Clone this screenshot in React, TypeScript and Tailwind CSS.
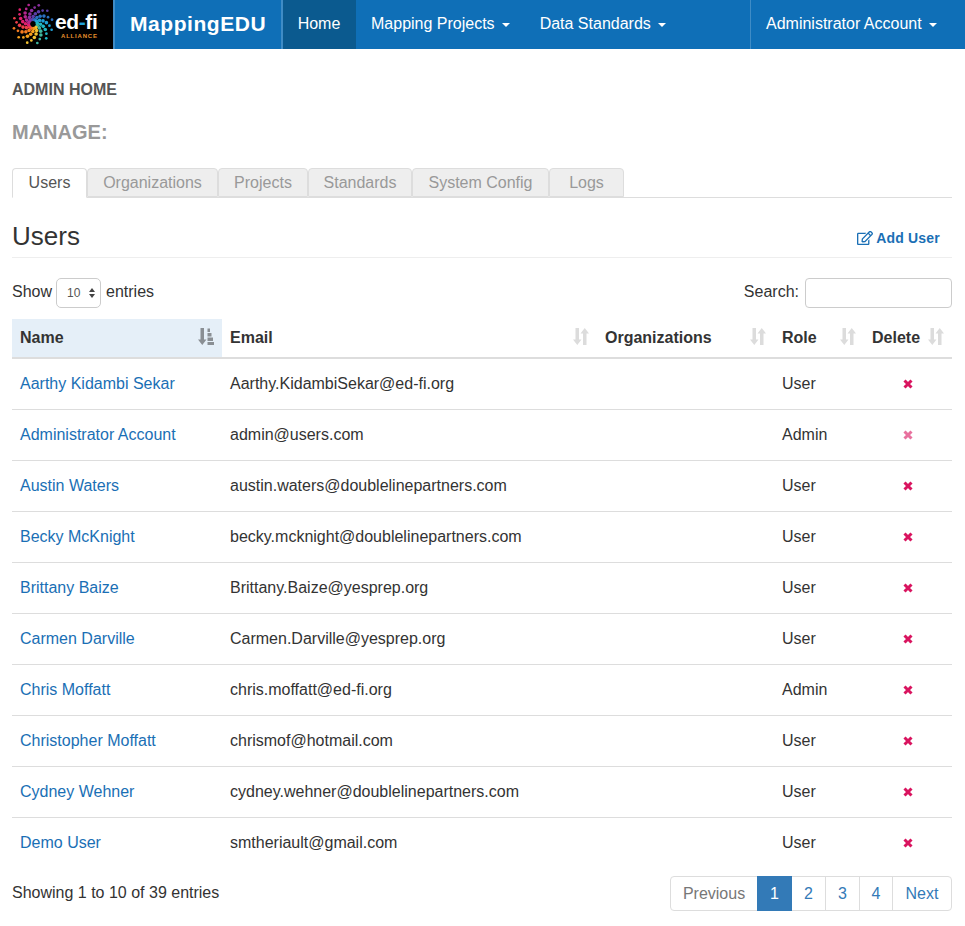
import { FaRegEdit } from 'react-icons/fa'

const users = [
  { name: 'Aarthy Kidambi Sekar', email: 'Aarthy.KidambiSekar@ed-fi.org', role: 'User' },
  { name: 'Administrator Account', email: 'admin@users.com', role: 'Admin', self: true },
  { name: 'Austin Waters', email: 'austin.waters@doublelinepartners.com', role: 'User' },
  { name: 'Becky McKnight', email: 'becky.mcknight@doublelinepartners.com', role: 'User' },
  { name: 'Brittany Baize', email: 'Brittany.Baize@yesprep.org', role: 'User' },
  { name: 'Carmen Darville', email: 'Carmen.Darville@yesprep.org', role: 'User' },
  { name: 'Chris Moffatt', email: 'chris.moffatt@ed-fi.org', role: 'Admin' },
  { name: 'Christopher Moffatt', email: 'chrismof@hotmail.com', role: 'User' },
  { name: 'Cydney Wehner', email: 'cydney.wehner@doublelinepartners.com', role: 'User' },
  { name: 'Demo User', email: 'smtheriault@gmail.com', role: 'User' },
]

const tabs = [
  { label: 'Organizations', w: 'w-[131px]' },
  { label: 'Projects', w: 'w-[90px]' },
  { label: 'Standards', w: 'w-[104px]' },
  { label: 'System Config', w: 'w-[137px]' },
  { label: 'Logs', w: 'w-[75px]' },
]

// clockwise from the top of the swirl
const swirlColors = ['#8a2f9e', '#5a3fa8', '#2a6fc0', '#1f9fd6', '#1fb5c4', '#3fb8a0', '#f2c230', '#f7a11d', '#f47a20', '#ee3f4a', '#e0206e', '#b5258f']

function Logo() {
  const dots = []
  for (let arm = 0; arm < 12; arm++) {
    for (let i = 0; i < 6; i++) {
      const a = (arm / 12) * Math.PI * 2 - Math.PI / 2 - 0.7 + i * 0.2
      const r = 4.5 + i * 3
      dots.push(
        <circle key={`${arm}-${i}`} cx={26 + r * Math.cos(a)} cy={24 + r * Math.sin(a)} r={i < 4 ? 1.8 : 1.35} fill={swirlColors[arm]} />
      )
    }
  }
  return (
    <svg width="52" height="49" viewBox="0 0 52 49" className="absolute left-[7px] top-0">
      {dots}
    </svg>
  )
}

function SortIcon({ active = false }: { active?: boolean }) {
  if (active) {
    return (
      <svg width="16" height="17" viewBox="0 0 16 17" className="absolute right-[8px] top-[9px] text-[#8a8f94]" fill="currentColor">
        <path d="M2.500 0h3.500v11.500h2.500L4.250 17 0 11.500h2.500z" />
        <path d="M9.500 0.500h2.500v3.500H9.500zM9.500 5h4v3.500h-4zM9.500 9.500h5.500V13H9.500zM9.500 14h6.500v3H9.500z" />
      </svg>
    )
  }
  return (
    <svg width="16" height="17" viewBox="0 0 16 17" className="absolute right-[8px] top-[9px] text-[#dcdcdc]" fill="currentColor">
      <path d="M2.500 0h3.500v11.500h2.500L4.250 17 0 11.500h2.500z" />
      <path d="M10 17h3.500V5.500H16L11.750 0 7.500 5.500H10z" />
    </svg>
  )
}

function RemoveIcon({ faded = false }: { faded?: boolean }) {
  return (
    <svg width="10" height="10" viewBox="0 0 10 10" className={`mx-auto text-[#d9145f] ${faded ? 'opacity-60' : ''}`}>
      <path d="M1.500 1.500L8.500 8.500M8.500 1.500L1.500 8.500" stroke="currentColor" strokeWidth="3" />
    </svg>
  )
}

function NavLink({ label }: { label: string }) {
  return (
    <a className="flex items-center px-[15px] pb-[2px] h-full text-white text-[16px]">
      {label}
      <span className="ml-[7px] mt-[2px] w-0 h-0 border-x-[4px] border-x-transparent border-t-[4px] border-t-white" />
    </a>
  )
}

export default function App() {
  return (
    <div className="w-[965px] h-[926px] bg-white text-[16px] text-[#333] overflow-hidden font-['Liberation_Sans',Arial,sans-serif]">
      <nav className="flex h-[49px] bg-[#0f6fb7]">
        <div className="relative w-[113px] bg-black">
          <Logo />
          <span className="absolute left-[55px] top-[12px] text-white text-[21px] font-bold leading-[20px] tracking-[-0.4px]">
            ed<span className="text-[#1fa2d8]">-</span>fi
          </span>
          <span className="absolute left-[61px] top-[32px] text-[#e8912d] text-[6px] font-bold leading-[8px] tracking-[0.8px]">ALLIANCE</span>
        </div>
        <div className="flex items-center w-[170px] pl-[15px] pb-[2px] border-x-2 border-[#3f8cc6] text-white text-[21px] font-bold tracking-[0.55px]">
          MappingEDU
        </div>
        <div className="flex items-center justify-center w-[72px] h-full pb-[2px] bg-[#0b5a8f] text-white">Home</div>
        <div className="w-px bg-[#0b5a8f]" />
        <NavLink label="Mapping Projects" />
        <NavLink label="Data Standards" />
        <div className="ml-auto flex h-full border-l border-[#3f8cc6] w-[215px]">
          <NavLink label="Administrator Account" />
        </div>
      </nav>

      <main className="pl-[12px] pr-[13px]">
        <h4 className="mt-[31px] text-[16px] leading-[20px] font-bold text-[#555]">ADMIN HOME</h4>
        <h3 className="mt-[20px] text-[20px] leading-[24px] font-bold text-[#999]">MANAGE:</h3>

        <div className="mt-[24px] flex h-[30px] border-b border-[#ddd]">
          <div className="w-[75px] h-[30px] flex items-center justify-center bg-white border border-[#ddd] border-b-white rounded-t-[4px] text-[#555]">Users</div>
          {tabs.map(tab => (
            <div key={tab.label} className={`${tab.w} h-[29px] flex items-center justify-center bg-[#eee] border border-[#ddd] rounded-t-[4px] text-[#999]`}>
              {tab.label}
            </div>
          ))}
        </div>

        <div className="mt-[20px] h-[40px] flex items-start justify-between border-b border-[#eee]">
          <h2 className="text-[26px] leading-[36px] text-[#333]">Users</h2>
          <a className="mt-[10px] mr-[12px] flex items-center gap-[3px] text-[#1a6fb5] text-[14px] leading-[20px] font-bold">
            <FaRegEdit className="w-[16px] h-[16px]" />
            <span className="tracking-[0.2px]">Add User</span>
          </a>
        </div>

        <div className="mt-[20px] flex items-center justify-between h-[30px]">
          <div className="flex items-center pb-[2px]">
            Show
            <div className="ml-[4px] mr-[5px] mt-[2px] w-[45px] h-[30px] flex items-center justify-between pl-[10px] pr-[5px] border border-[#ccc] rounded-[5px] text-[12px] text-[#555]">
              10
              <span className="flex flex-col gap-[2px]">
                <span className="w-0 h-0 border-x-[3px] border-x-transparent border-b-[4px] border-b-[#444]" />
                <span className="w-0 h-0 border-x-[3px] border-x-transparent border-t-[4px] border-t-[#444]" />
              </span>
            </div>
            entries
          </div>
          <div className="flex items-center">
            <span className="pb-[2px]">Search:</span>
            <div className="ml-[6px] w-[147px] h-[30px] border border-[#ccc] rounded-[4px]" />
          </div>
        </div>

        <table className="mt-[11px] w-[940px] table-fixed border-collapse">
          <thead>
            <tr className="h-[39px] border-b-[2px] border-[#ddd] text-left">
              <th className="relative w-[210px] px-[8px] bg-[#e5eff8] font-bold">Name<SortIcon active /></th>
              <th className="relative w-[375px] px-[8px] font-bold">Email<SortIcon /></th>
              <th className="relative w-[177px] px-[8px] font-bold">Organizations<SortIcon /></th>
              <th className="relative w-[90px] px-[8px] font-bold">Role<SortIcon /></th>
              <th className="relative w-[88px] px-[8px] font-bold">Delete<SortIcon /></th>
            </tr>
          </thead>
          <tbody>
            {users.map((user, i) => (
              <tr key={user.email} className={`h-[51px] ${i < users.length - 1 ? 'border-b border-[#ddd]' : ''}`}>
                <td className="px-[8px] text-[#1a6fb5]">{user.name}</td>
                <td className="px-[8px]">{user.email}</td>
                <td className="px-[8px]"></td>
                <td className="px-[8px]">{user.role}</td>
                <td className="px-[8px]">
                  <RemoveIcon faded={user.self} />
                </td>
              </tr>
            ))}
          </tbody>
        </table>

        <div className="mt-[8px] flex items-start justify-between">
          <div className="mt-[5px] leading-[24px]">Showing 1 to 10 of 39 entries</div>
          <div className="flex h-[35px] border border-[#ddd] rounded-[4px] text-[#337ab7]">
            <span className="w-[86px] flex items-center justify-center text-[#777]">Previous</span>
            <span className="w-[35px] -my-px flex items-center justify-center bg-[#337ab7] text-white">1</span>
            <span className="w-[34px] flex items-center justify-center border-r border-[#ddd]">2</span>
            <span className="w-[34px] flex items-center justify-center border-r border-[#ddd]">3</span>
            <span className="w-[33px] flex items-center justify-center border-r border-[#ddd]">4</span>
            <span className="w-[58px] flex items-center justify-center">Next</span>
          </div>
        </div>
      </main>
    </div>
  )
}
